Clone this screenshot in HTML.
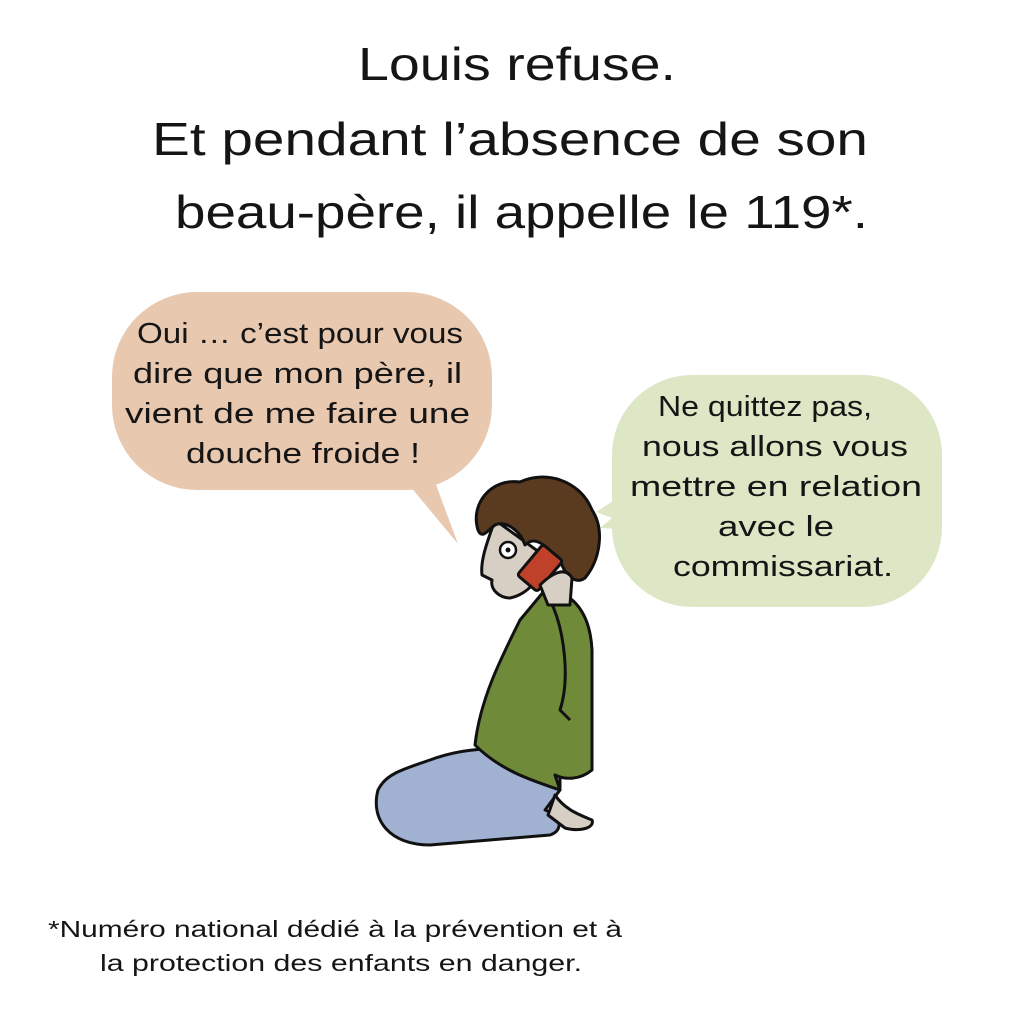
<!DOCTYPE html>
<html><head><meta charset="utf-8"><style>
html,body{margin:0;padding:0;background:#fff;}
svg{display:block}
text{font-family:"Liberation Sans",sans-serif;fill:#151515;}
</style></head><body>
<svg width="1024" height="1024" viewBox="0 0 1024 1024">
<rect width="1024" height="1024" fill="#fff"/>
<g font-size="46" lengthAdjust="spacingAndGlyphs">
<text x="358" y="80" textLength="318" lengthAdjust="spacingAndGlyphs">Louis refuse.</text>
<text x="152" y="155" textLength="716" lengthAdjust="spacingAndGlyphs">Et pendant l’absence de son</text>
<text x="175" y="228" textLength="693" lengthAdjust="spacingAndGlyphs">beau-père, il appelle le 119*.</text>
</g>
<!-- pink bubble -->
<path d="M405,480 L458,544 L435,482 Z" fill="#e9c8b0"/>
<rect x="112" y="292" width="380" height="198" rx="85" fill="#e9c8b0"/>
<g font-size="29">
<text x="137" y="343" textLength="326" lengthAdjust="spacingAndGlyphs">Oui … c’est pour vous</text>
<text x="133" y="383" textLength="329" lengthAdjust="spacingAndGlyphs">dire que mon père, il</text>
<text x="125" y="423" textLength="345" lengthAdjust="spacingAndGlyphs">vient de me faire une</text>
<text x="186" y="463" textLength="234" lengthAdjust="spacingAndGlyphs">douche froide !</text>
</g>
<!-- green bubble -->
<path d="M630,490 L596,512 L612,518 L600,528 L640,530 Z" fill="#dde6c5"/>
<rect x="612" y="375" width="330" height="232" rx="80" fill="#dde6c5"/>
<g font-size="29">
<text x="658" y="416" textLength="214" lengthAdjust="spacingAndGlyphs">Ne quittez pas,</text>
<text x="642" y="456" textLength="266" lengthAdjust="spacingAndGlyphs">nous allons vous</text>
<text x="630" y="496" textLength="292" lengthAdjust="spacingAndGlyphs">mettre en relation</text>
<text x="718" y="536" textLength="116" lengthAdjust="spacingAndGlyphs">avec le</text>
<text x="673" y="576" textLength="220" lengthAdjust="spacingAndGlyphs">commissariat.</text>
</g>
<!-- character -->
<g stroke="#111" stroke-width="3" stroke-linejoin="round">
<path d="M378,790 C370,820 390,845 430,845 L550,835 C565,830 560,815 545,810 L560,790 L560,760 C520,745 470,745 430,760 C400,770 385,775 378,790 Z" fill="#a0b1d1"/>
<path d="M555,795 C565,810 580,815 592,820 C595,828 580,832 565,828 L548,815 Z" fill="#d8cfc4"/>
<path d="M475,745 C480,700 500,660 520,620 L545,590 C570,590 590,610 592,650 L592,770 C580,780 565,780 555,775 L560,790 C530,780 500,770 475,745 Z" fill="#6f8b3a"/>
<path d="M550,600 C565,630 570,680 560,710 L570,720" fill="none"/>
<path d="M495,520 C488,540 480,560 482,575 L492,580 C490,590 500,598 510,598 C520,596 528,590 532,585 L550,560 Z" fill="#d8cfc4"/>
<path d="M478,530 C470,505 490,478 520,482 C545,470 580,480 592,510 C605,530 600,560 585,578 C575,585 565,575 560,560 C545,545 535,535 525,545 C520,530 505,520 495,525 C488,530 482,540 478,530 Z" fill="#5b3b1f"/>
<rect x="527" y="548" width="26" height="40" rx="3" transform="rotate(40 540 568)" fill="#c0412a"/>
<path d="M540,585 C550,575 565,565 572,578 L570,605 L548,605 Z" fill="#d8cfc4"/>
</g>
<circle cx="508" cy="550" r="8" fill="#fff" stroke="#111" stroke-width="2.5"/>
<circle cx="508" cy="550" r="2.5" fill="#111"/>
<g font-size="23">
<text x="48" y="937" textLength="574" lengthAdjust="spacingAndGlyphs">*Numéro national dédié à la prévention et à</text>
<text x="100" y="971" textLength="482" lengthAdjust="spacingAndGlyphs">la protection des enfants en danger.</text>
</g>
</svg>
</body></html>
